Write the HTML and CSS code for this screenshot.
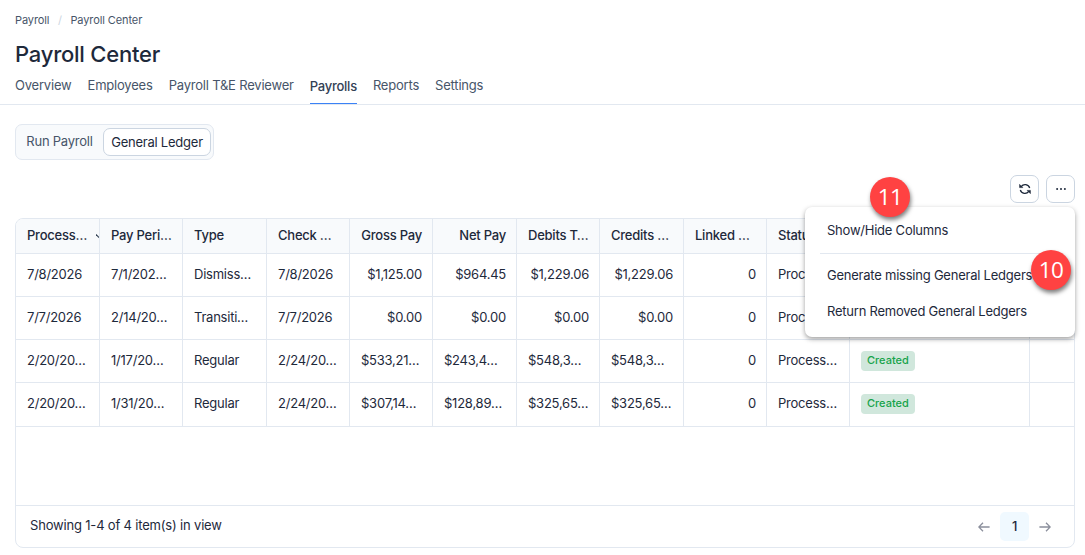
FILE: index.html
```html
<!DOCTYPE html>
<html lang="en">
<head>
<meta charset="utf-8">
<title>Payroll Center</title>
<link rel="stylesheet" href="styles.css">
</head>
<body>
<header class="page-header">
  <nav class="breadcrumb"><span>Payroll</span><span class="sep">/</span><span>Payroll Center</span></nav>
  <h1 class="title">Payroll Center</h1>
  <nav class="tabs">
    <a class="tab">Overview</a><a class="tab">Employees</a><a class="tab">Payroll T&amp;E Reviewer</a><a class="tab active">Payrolls</a><a class="tab">Reports</a><a class="tab">Settings</a>
  </nav>
</header>
<main class="content">
  <div class="segmented"><button class="segment">Run Payroll</button><button class="segment selected">General Ledger</button></div>
  <div class="toolbar">
    <button class="icon-btn" aria-label="Refresh">
      <svg width="14" height="14" viewBox="0 0 14 14" fill="none" stroke="#1e293b" stroke-width="1.3"><path d="M3.2 4.7A4.8 4.8 0 0 1 11.7 6M10.8 9.3A4.8 4.8 0 0 1 2.3 8"/><path d="M1.6 2.4v3.2h3.2zM12.4 11.6V8.4H9.2z" fill="#1e293b" stroke-width=".6"/></svg>
    </button>
    <button class="icon-btn" aria-label="More">
      <svg width="12" height="4" viewBox="0 0 12 4" fill="#1e293b"><circle cx="2.1" cy="2" r="1"/><circle cx="6" cy="2" r="1"/><circle cx="9.9" cy="2" r="1"/></svg>
    </button>
    <div class="menu">
      <div class="menu-item">Show/Hide Columns</div>
      <div class="divider"></div>
      <div class="menu-item">Generate missing General Ledgers</div>
      <div class="menu-item">Return Removed General Ledgers</div>
    </div>
    <div class="marker marker-columns">11</div>
    <div class="marker marker-generate">10</div>
  </div>
  <section class="grid">
    <div class="row head">
      <div class="cell sorted">Process…<svg class="sort" width="3" height="4" viewBox="0 0 3 4"><path d="M0 .5l3 3" stroke="#334155" stroke-width="1.1"/></svg></div><div class="cell">Pay Peri…</div><div class="cell">Type</div><div class="cell">Check …</div><div class="cell num">Gross Pay</div><div class="cell num">Net Pay</div><div class="cell">Debits T…</div><div class="cell">Credits …</div><div class="cell">Linked …</div><div class="cell">Status</div><div class="cell"></div><div class="cell"></div>
    </div>
    <div class="row">
      <div class="cell">7/8/2026</div><div class="cell">7/1/202…</div><div class="cell">Dismiss…</div><div class="cell">7/8/2026</div><div class="cell num">$1,125.00</div><div class="cell num">$964.45</div><div class="cell num">$1,229.06</div><div class="cell num">$1,229.06</div><div class="cell num">0</div><div class="cell">Process…</div><div class="cell"></div><div class="cell"></div>
    </div>
    <div class="row">
      <div class="cell">7/7/2026</div><div class="cell">2/14/20…</div><div class="cell">Transiti…</div><div class="cell">7/7/2026</div><div class="cell num">$0.00</div><div class="cell num">$0.00</div><div class="cell num">$0.00</div><div class="cell num">$0.00</div><div class="cell num">0</div><div class="cell">Process…</div><div class="cell"></div><div class="cell"></div>
    </div>
    <div class="row">
      <div class="cell">2/20/20…</div><div class="cell">1/17/20…</div><div class="cell">Regular</div><div class="cell">2/24/20…</div><div class="cell">$533,21…</div><div class="cell">$243,4…</div><div class="cell">$548,3…</div><div class="cell">$548,3…</div><div class="cell num">0</div><div class="cell">Process…</div><div class="cell"><span class="badge">Created</span></div><div class="cell"></div>
    </div>
    <div class="row last">
      <div class="cell">2/20/20…</div><div class="cell">1/31/20…</div><div class="cell">Regular</div><div class="cell">2/24/20…</div><div class="cell">$307,14…</div><div class="cell">$128,89…</div><div class="cell">$325,65…</div><div class="cell">$325,65…</div><div class="cell num">0</div><div class="cell">Process…</div><div class="cell"><span class="badge">Created</span></div><div class="cell"></div>
    </div>
    <footer class="pager">
      <span class="summary">Showing 1-4 of 4 item(s) in view</span>
      <div class="pages">
        <svg width="12" height="12" viewBox="0 0 12 12" fill="none" stroke="#8b8f9c" stroke-width="1.3"><path d="M11.6 6H1M5 1.7L.8 6 5 10.3"/></svg>
        <span class="page">1</span>
        <svg width="12" height="12" viewBox="0 0 12 12" fill="none" stroke="#8b8f9c" stroke-width="1.3"><path d="M.4 6H11M7 1.7L11.2 6 7 10.3"/></svg>
      </div>
    </footer>
  </section>
</main>
</body>
</html>
```
FILE: styles.css
```css
* { box-sizing: border-box; }
body { margin: 0; height: 555px; overflow: hidden; background: #fff; color: #1e293b; font: 13px/20px Inter, "Liberation Sans", sans-serif; letter-spacing: -.23px; }
button { font: inherit; letter-spacing: inherit; color: inherit; padding: 0; margin: 0; }
.page-header { height: 105px; padding: 12px 15px 0; border-bottom: 1px solid #e2e8f0; }
.breadcrumb { display: flex; height: 16px; font-size: 11px; line-height: 16px; letter-spacing: -.1px; color: #475569; }
.sep { width: 21px; text-align: center; color: #cbd5e1; }
.title { margin: 10px 0 0; font-size: 22px; line-height: 32px; font-weight: 500; }
.tabs { display: flex; gap: 16px; margin-top: 5px; height: 29px; letter-spacing: -.2px; color: #475569; }
.tab { line-height: 21px; }
.tab.active { padding-top: 1px; border-bottom: 1px solid #3b82f6; font-weight: 500; letter-spacing: -.25px; color: #334155; }
.content { padding: 19px 10px 0 15px; }
.segmented { display: flex; width: 199px; height: 36px; padding: 3px 2px 3px 0; border: 1px solid #e2e8f0; border-radius: 7px; background: #f8fafc; }
.segment { flex: 1; border: 0; background: none; color: #475569; white-space: nowrap; line-height: 26px; padding-bottom: 2px; }
.segment.selected { flex: 0 0 108px; border: 1px solid #cbd5e1; border-radius: 7px; background: #fff; color: #1e293b; }
.toolbar { position: relative; display: flex; justify-content: flex-end; gap: 7px; height: 28px; margin-top: 15px; }
.icon-btn { display: flex; align-items: center; justify-content: center; width: 29px; height: 28px; border: 1px solid #cbd5e1; border-radius: 7px; background: #fff; }
.menu { position: absolute; z-index: 2; top: 32px; right: 0; width: 270px; height: 130px; padding: 5px 15px; border-radius: 7px; background: #fff; box-shadow: 0 2px 5px rgba(0,0,0,.38); }
.menu-item { height: 36px; padding: 0 7px; line-height: 36px; white-space: nowrap; }
.divider { height: 1px; margin: 5px 0 3px; background: #e2e8f0; }
.marker { position: absolute; z-index: 3; width: 40px; height: 40px; border-radius: 50%; background: #ff4242; color: #fff; font: 22.5px/39px "Open Sans", "Noto Sans", sans-serif; letter-spacing: -.6px; text-align: center; box-shadow: 1px 3px 4px rgba(0,0,0,.5); }
.marker-columns { left: 855px; top: 2px; }
.marker-generate { left: 1016px; top: 75px; }
.grid { display: flex; flex-direction: column; height: 330px; margin-top: 15px; border: 1px solid #e2e8f0; border-radius: 8px; overflow: hidden; }
.row { display: grid; grid-template-columns: 84px 83px 84px 83px 83px 84px 83px 84px 83px 83px 180px 1fr; height: 43px; border-bottom: 1px solid #e2e8f0; flex: none; }
.row.last { height: 44px; }
.head { height: 35px; background: #f8fafc; font-weight: 500; }
.cell { padding: 0 10px 0 11px; border-right: 1px solid #e2e8f0; line-height: 41px; white-space: nowrap; overflow: hidden; }
.head .cell { line-height: 33px; }
.cell:last-child { border-right: 0; }
.num { text-align: right; }
.sorted { display: flex; align-items: flex-start; justify-content: space-between; padding-right: 0; }
.sort { align-self: center; }
.badge { display: inline-block; height: 20px; padding: 0 6px; border-radius: 4px; background: #d0e7dc; color: #16a34a; font-size: 11px; line-height: 19px; font-weight: 500; letter-spacing: 0; vertical-align: middle; }
.pager { display: flex; justify-content: space-between; align-items: center; height: 42px; margin-top: auto; padding: 0 23px 0 14px; border-top: 1px solid #e2e8f0; flex: none; }
.summary { letter-spacing: -.18px; padding-bottom: 3px; }
.pages { display: flex; align-items: center; gap: 10px; }
.page { width: 29px; height: 29px; border-radius: 5px; background: #f0f9ff; text-align: center; line-height: 29px; font-weight: 500; }
```
